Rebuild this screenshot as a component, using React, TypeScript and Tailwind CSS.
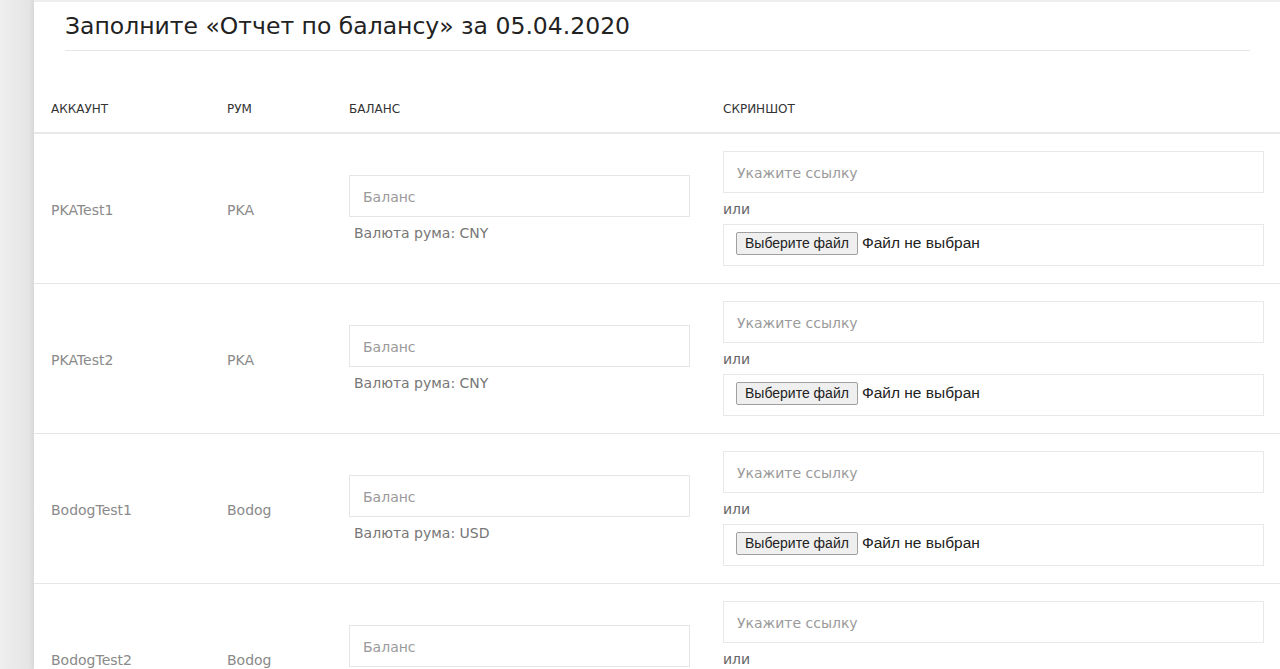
import React from "react";

type Row = { account: string; room: string; currency: string };

const rows: Row[] = [
  { account: "PKATest1", room: "PKA", currency: "CNY" },
  { account: "PKATest2", room: "PKA", currency: "CNY" },
  { account: "BodogTest1", room: "Bodog", currency: "USD" },
  { account: "BodogTest2", room: "Bodog", currency: "USD" },
];

const font = "font-['DejaVu_Sans',_'Open_Sans',_sans-serif]";

function BalanceRow({ row }: { row: Row }) {
  return (
    <div className="grid grid-cols-[176px_122px_374px_1fr] border-b border-[#e6e6e6] pl-[17px] pr-[16px] h-[150px] items-center shrink-0">
      <div className="mt-[3px] text-[14px] text-[#8a8a8a]">{row.account}</div>
      <div className="mt-[3px] text-[14px] text-[#8a8a8a]">{row.room}</div>
      <div className="mt-[0px] flex flex-col w-[341px]">
        <input
          placeholder="Баланс"
          className="h-[42px] border border-[#e5e5e5] px-[13px] pt-[2px] text-[14px] placeholder:text-[#9a9a9a] outline-none"
        />
        <div className="mt-[6px] pl-[5px] leading-[20px] text-[14px] text-[#777]">
          Валюта рума: {row.currency}
        </div>
      </div>
      <div className="flex flex-col self-start pt-[17px]">
        <input
          placeholder="Укажите ссылку"
          className="h-[42px] border border-[#e8e8e8] px-[13px] pt-[2px] text-[14px] placeholder:text-[#9a9a9a] outline-none"
        />
        <div className="h-[31px] flex items-center pt-[2px] text-[14px] text-[#666]">или</div>
        <div className="h-[42px] border border-[#e8e8e8] flex items-center pl-[12px] pb-[4px] font-['Liberation_Sans',_Arial,_sans-serif] text-[#222]">
          <span className="border border-[#a0a0a0] bg-[#efefef] rounded-[2px] px-[8px] h-[23px] flex items-center text-[14px]">
            Выберите файл
          </span>
          <span className="ml-[4px] text-[15.5px]">Файл не выбран</span>
        </div>
      </div>
    </div>
  );
}

export default function App() {
  return (
    <div className={`${font} flex h-[669px] w-full bg-[#ececec] overflow-hidden`}>
      <div className="w-[34px] shrink-0 bg-gradient-to-r from-[#efefef] to-[#e3e3e3]" />
      <div className="flex-1 bg-white flex flex-col border-t-[2px] border-[#eeeeee] shadow-[-2px_0_4px_rgba(0,0,0,0.06)]">
        {/* Title */}
        <div className="pl-[31px] pr-[30px]">
          <h1 className="h-[49px] flex items-center text-[23.5px] text-[#222] border-b border-[#e6e6e6] pt-[1px]">
            Заполните «Отчет по балансу» за 05.04.2020
          </h1>
        </div>

        {/* Header */}
        <div className="grid grid-cols-[176px_122px_374px_1fr] pl-[17px] pr-[16px] h-[83px] items-end pb-[16px] border-b-2 border-[#e8e8e8] text-[12px] leading-[14px] text-[#333] uppercase shrink-0">
          <div>Аккаунт</div>
          <div>Рум</div>
          <div>Баланс</div>
          <div>Скриншот</div>
        </div>

        {rows.map((r) => (
          <BalanceRow key={r.account} row={r} />
        ))}
      </div>
    </div>
  );
}
